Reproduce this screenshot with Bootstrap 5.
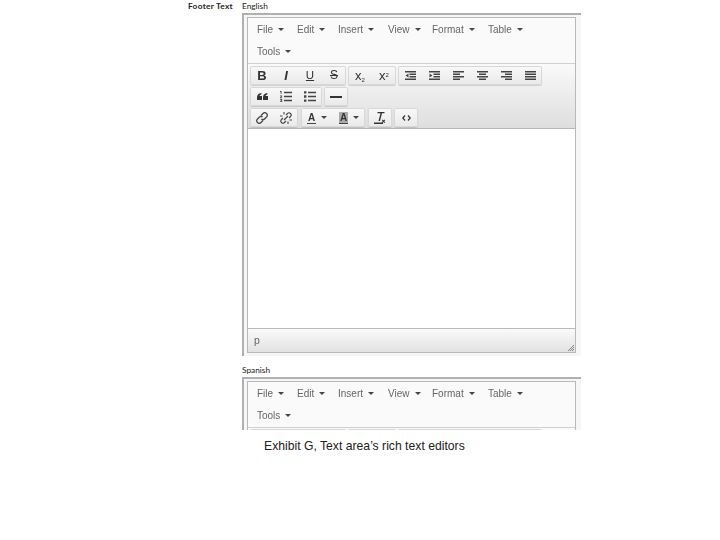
<!DOCTYPE html>
<html lang="en">
<head>
<meta charset="utf-8">
<title>Exhibit G</title>
<link href="https://cdn.jsdelivr.net/npm/bootstrap@5.3.0/dist/css/bootstrap.min.css" rel="stylesheet">
<style>
body{background:#fff;margin:0;font-family:"Liberation Sans",Arial,sans-serif;color:#333}
.sheet{padding-left:188px;width:720px}
.lbl{font-family:Lato,sans-serif;font-size:8.3px;line-height:13px;color:#222;height:13px}
.lbl-col{width:54px;font-weight:700;letter-spacing:.3px}
.sub{margin-left:54px}
.sub-sp{margin-top:8px}
.rte{margin-left:54px;width:339px;background:#f6f6f6;border-top:2px solid #b0b0b0;border-left:2px solid #b0b0b0;padding:2px 5px 3px 3px;filter:blur(.35px)}
.rte-clip{height:53px;overflow:hidden;padding-bottom:0}
.rte-in{border:1px solid #b9b9b9;background:#fff}
.menu-b{height:46px;background:#fafafa;border-bottom:1px solid #d0d0d0;font-size:10px;color:#666}
.menu-r{height:22px;padding:0 0 0 9px;align-items:center}
.mi{display:inline-flex;align-items:center;gap:5px}
.mi::after{content:"";border-top:3px solid #444;border-left:3px solid transparent;border-right:3px solid transparent}
.w1{width:40px}.w2{width:41px}.w3{width:50px}.w4{width:44px}.w5{width:56px}
.tool-b{height:65px;padding:2px 0 0 2px;background:linear-gradient(#fafafa,#dedede);border-bottom:1px solid #b9b9b9;gap:2px}
.tool-stub{padding-top:1px}
.tool-r{gap:2px;height:19px}
.gap3{gap:3px}
.grp{border-radius:2px;box-shadow:inset 0 0 0 1px #d8d8d8,0 1px 1px rgba(0,0,0,.14);background:linear-gradient(#f9f9f9,#e9e9e9);height:19px}
.g1{width:96px}.g2{width:48px}.g3{width:144px}
.btn-group>.tb.btn{width:24px;height:19px;padding:0;margin:0!important;border:0;border-radius:0;font-size:11px;line-height:19px;color:#333;display:flex;align-items:center;justify-content:center;flex:none}
.btn-group>.tb-w.btn{width:32px;gap:5px}
.tb svg{display:block}
.car{border-top:3px solid #444;border-left:3px solid transparent;border-right:3px solid transparent}
.t-b{font-weight:700;font-size:13px}
.t-i{font-style:italic;font-weight:700;font-size:13px}
.t-u{text-decoration:underline;font-size:11.500px}
.t-s{text-decoration:line-through;font-size:12px}
.t-x{font-size:13px}
.t-x sub,.t-x sup{font-size:6px}
.t-a{font-size:10px;font-weight:700;border-bottom:1.500px solid #444;line-height:11px;padding:0 1px}
.t-h{background:#aaa}
.edit-a{height:200px;background:#fff;border-bottom:1px solid #b9b9b9}
.stat-b{height:23px;background:linear-gradient(#fafafa,#e2e2e2);font-size:10.500px;color:#666;padding:1px 0 0 6px;align-items:center}
.grip{margin-left:auto;margin-top:13px;margin-right:1px}
.cap{font-size:12.200px;line-height:16px;color:#222;padding:8px 0 0 76px}
</style>
</head>
<body>
<div class="sheet">
  <div class="d-flex lbl"><div class="lbl-col">Footer Text</div><div>English</div></div>
  <div class="rte">
    <div class="rte-in">
      <div class="menu-b">
        <div class="d-flex menu-r">
          <span class="w1"><span class="mi">File</span></span><span class="w2"><span class="mi">Edit</span></span><span class="w3"><span class="mi">Insert</span></span><span class="w4"><span class="mi">View</span></span><span class="w5"><span class="mi">Format</span></span><span><span class="mi">Table</span></span>
        </div>
        <div class="d-flex menu-r"><span class="mi">Tools</span></div>
      </div>
      <div class="tool-b d-flex flex-column">
        <div class="d-flex tool-r">
          <div class="btn-group grp">
            <button class="btn tb"><span class="t-b">B</span></button>
            <button class="btn tb"><span class="t-i">I</span></button>
            <button class="btn tb"><span class="t-u">U</span></button>
            <button class="btn tb"><span class="t-s">S</span></button>
          </div>
          <div class="btn-group grp">
            <button class="btn tb"><span class="t-x">x<sub>2</sub></span></button>
            <button class="btn tb"><span class="t-x">x<sup>2</sup></span></button>
          </div>
          <div class="btn-group grp">
            <button class="btn tb"><svg width="11" height="9" viewBox="0 0 11 9" fill="#444"><path d="M0 0h11v1.500H0zM4.500 2.500H11V4H4.500zM4.500 5H11v1.500H4.500zM0 7.500h11V9H0zM3.500 2.500v4L.5 4.500z"/></svg></button>
            <button class="btn tb"><svg width="11" height="9" viewBox="0 0 11 9" fill="#444"><path d="M0 0h11v1.500H0zM4.500 2.500H11V4H4.500zM4.500 5H11v1.500H4.500zM0 7.500h11V9H0zM.5 2.500v4l3-2z"/></svg></button>
            <button class="btn tb"><svg width="11" height="9" viewBox="0 0 11 9" fill="#444"><path d="M0 0h11v1.500H0zM0 2.500h7V4H0zM0 5h11v1.500H0zM0 7.500h7V9H0z"/></svg></button>
            <button class="btn tb"><svg width="11" height="9" viewBox="0 0 11 9" fill="#444"><path d="M0 0h11v1.500H0zM2 2.500h7V4H2zM0 5h11v1.500H0zM2 7.500h7V9H2z"/></svg></button>
            <button class="btn tb"><svg width="11" height="9" viewBox="0 0 11 9" fill="#444"><path d="M0 0h11v1.500H0zM4 2.500h7V4H4zM0 5h11v1.500H0zM4 7.500h7V9H4z"/></svg></button>
            <button class="btn tb"><svg width="11" height="9" viewBox="0 0 11 9" fill="#444"><path d="M0 0h11v1.500H0zM0 2.500h11V4H0zM0 5h11v1.500H0zM0 7.500h11V9H0z"/></svg></button>
          </div>
        </div>
        <div class="d-flex tool-r">
          <div class="btn-group grp">
            <button class="btn tb"><svg width="11" height="7" viewBox="0 0 11 7" fill="#333"><path d="M0 7V4.200C0 2 1.300.600 4.400 0v1.400C3 1.800 2.500 2.400 2.500 3H5v4zM6 7V4.200C6 2 7.300.600 10.400 0v1.400C9 1.800 8.500 2.400 8.500 3H11v4z"/></svg></button>
            <button class="btn tb"><svg width="12" height="11" viewBox="0 0 12 11" fill="#444"><path d="M4 .8h8v1.400H4zM4 4.800h8v1.400H4zM4 8.800h8v1.400H4zM0 0h1.500v3H.7V1H0zM0 4.500h2.200v.8L.9 6.500h1.300v.7H0v-.8l1.300-1.200H0zM0 8h2.200v3H0v-.7h1.400v-.5H.5v-.6h.9v-.5H0z"/></svg></button>
            <button class="btn tb"><svg width="12" height="11" viewBox="0 0 12 11" fill="#444"><path d="M4 .8h8v1.400H4zM4 4.800h8v1.400H4zM4 8.800h8v1.400H4zM0 .2h2.400v2.400H0zM0 4.300h2.400v2.400H0zM0 8.400h2.400v2.400H0z"/></svg></button>
          </div>
          <div class="btn-group grp">
            <button class="btn tb"><svg width="12" height="2" viewBox="0 0 12 2" fill="#333"><path d="M0 0h12v2H0z"/></svg></button>
          </div>
        </div>
        <div class="d-flex tool-r gap3">
          <div class="btn-group grp">
            <button class="btn tb"><svg width="12" height="12" viewBox="0 0 12 12" fill="none" stroke="#444" stroke-width="1.200"><path d="M5 3.500 7 1.500a2 2 0 0 1 3.500 3.500L8.500 7a2 2 0 0 1-3 0M7 8.500 5 10.500A2 2 0 0 1 1.500 7L3.500 5a2 2 0 0 1 3 0"/></svg></button>
            <button class="btn tb"><svg width="12" height="12" viewBox="0 0 12 12" fill="none" stroke="#444" stroke-width="1.100"><path d="M6 3 7.500 1.500a2 2 0 0 1 3 3L9 6M6 9 4.500 10.500a2 2 0 0 1-3-3L3 6M4 0v2.500M0 4h2.500M8 12V9.500M12 8H9.500M8 4 4 8"/></svg></button>
          </div>
          <div class="btn-group grp">
            <button class="btn tb tb-w"><span class="t-a">A</span><span class="car"></span></button>
            <button class="btn tb tb-w"><span class="t-a t-h">A</span><span class="car"></span></button>
          </div>
          <div class="d-flex tool-r">
            <div class="btn-group grp">
              <button class="btn tb"><svg width="13" height="12" viewBox="0 0 13 12" fill="#333"><path d="M3.500 0h7v1.200H8L6 9H4.500L6.500 1.200h-3zM0 10.500h9V12H0zM8.500 7.500l1 1 1-1 .7.700-1 1 1 1-.7.700-1-1-1 1-.7-.7 1-1-1-1z"/></svg></button>
            </div>
            <div class="btn-group grp">
              <button class="btn tb"><svg width="9" height="6" viewBox="0 0 9 6" fill="none" stroke="#333" stroke-width="1.200"><path d="M3 .5.800 3 3 5.500M6 .5 8.200 3 6 5.500"/></svg></button>
            </div>
          </div>
        </div>
      </div>
      <div class="edit-a"></div>
      <div class="stat-b d-flex"><span>p</span><svg class="grip" width="6" height="6" viewBox="0 0 6 6" stroke="#888" stroke-width="1"><path d="M0 6 6 0M2 6l4-4M4 6l2-2"/></svg></div>
    </div>
  </div>
  <div class="lbl sub sub-sp">Spanish</div>
  <div class="rte rte-clip">
    <div class="rte-in">
      <div class="menu-b">
        <div class="d-flex menu-r">
          <span class="w1"><span class="mi">File</span></span><span class="w2"><span class="mi">Edit</span></span><span class="w3"><span class="mi">Insert</span></span><span class="w4"><span class="mi">View</span></span><span class="w5"><span class="mi">Format</span></span><span><span class="mi">Table</span></span>
        </div>
        <div class="d-flex menu-r"><span class="mi">Tools</span></div>
      </div>
      <div class="tool-b tool-stub d-flex flex-column">
        <div class="d-flex tool-r">
          <div class="grp g1"></div>
          <div class="grp g2"></div>
          <div class="grp g3"></div>
        </div>
      </div>
    </div>
  </div>
  <div class="cap">Exhibit G, Text area’s rich text editors</div>
</div>
</body>
</html>
